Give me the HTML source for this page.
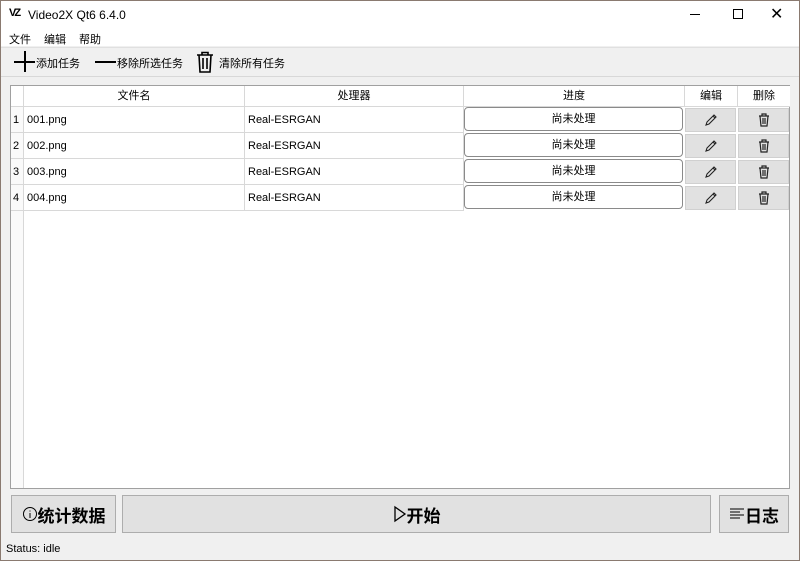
<!DOCTYPE html>
<html><head><meta charset="utf-8"><style>
*{box-sizing:border-box;margin:0;padding:0}
body{width:800px;height:561px;overflow:hidden;background:#f0f0f0;font-family:"Liberation Sans","Noto Sans CJK SC",sans-serif;font-size:11px;color:#000}
.frame{position:absolute;left:0;top:0;width:800px;height:561px;border:1px solid #8a7a70;pointer-events:none}
.abs{position:absolute}
.title{left:0;top:0;width:800px;height:30px;background:#fff}
.menu{left:0;top:30px;width:800px;height:16px;background:#fff}
.tb{left:0;top:47px;width:800px;height:30px;background:#f0f0f0;border-top:1px solid #e0e0e0;border-bottom:1px solid #d8d8d8}
.table{left:10px;top:85px;width:780px;height:404px;background:#fff;border:1px solid #a0a0a0}
.hc{position:absolute;top:0;height:21px;line-height:21px;text-align:center;border-right:1px solid #d8d8d8;border-bottom:1px solid #d8d8d8;background:#fff}
.cell{position:absolute;height:26px;line-height:26px;border-right:1px solid #d8d8d8;border-bottom:1px solid #d8d8d8;padding-left:3px;white-space:nowrap}
.pb{position:absolute;height:24px;border:1px solid #8a8a8a;border-radius:4px;background:#fff;text-align:center;line-height:22px}
.bt{position:absolute;height:24px;background:#e1e1e1;border:1px solid #d0d0d0;display:flex;align-items:center;justify-content:center}
.big{position:absolute;top:495px;height:38px;background:#e1e1e1;border:1px solid #adadad;display:flex;align-items:center;justify-content:center;font-size:17px;font-weight:bold}
</style></head><body>
<div class="abs title">
 <div class="abs" style="left:9px;top:7px;font-size:11px;font-weight:bold;letter-spacing:-2px">VZ</div>
 <div class="abs" style="left:28px;top:8px;font-size:12px">Video2X Qt6 6.4.0</div>
 <div class="abs" style="left:690px;top:14px;width:10px;height:1px;background:#000"></div>
 <div class="abs" style="left:733px;top:9px;width:10px;height:10px;border:1px solid #000"></div>
 <div class="abs" style="left:770px;top:4px;font-size:16px">✕</div>
</div>
<div class="abs menu"><span class="abs" style="left:9px;top:1px">文件</span><span class="abs" style="left:44px;top:1px">编辑</span><span class="abs" style="left:79px;top:1px">帮助</span></div>
<div class="abs tb">
 <div class="abs" style="left:14px;top:13px;width:21px;height:1.5px;background:#000"></div>
 <div class="abs" style="left:24px;top:3px;width:1.5px;height:21px;background:#000"></div>
 <span class="abs" style="left:36px;top:7px">添加任务</span>
 <div class="abs" style="left:95px;top:13px;width:21px;height:1.5px;background:#000"></div>
 <span class="abs" style="left:117px;top:7px">移除所选任务</span>
 <svg class="abs" style="left:196px;top:3px" width="18" height="22" viewBox="0 0 18 22" fill="none" stroke="#000" stroke-width="1.6"><path d="M1 4h16M6 4V1.5h6V4M3 4l1 17h10l1-17M7 7v11M11 7v11"/></svg>
 <span class="abs" style="left:219px;top:7px">清除所有任务</span>
</div>
<div class="abs table">
 <div class="hc" style="left:0;width:13px"></div>
 <div class="hc" style="left:13px;width:221px">文件名</div>
 <div class="hc" style="left:234px;width:219px">处理器</div>
 <div class="hc" style="left:453px;width:221px">进度</div>
 <div class="hc" style="left:674px;width:53px">编辑</div>
 <div class="hc" style="left:727px;width:52px;border-right:none">删除</div>
 <div class="abs" style="left:0;top:21px;width:13px;height:381px;background:#fafafa;border-right:1px solid #d8d8d8"></div>
 <div style="position:absolute;left:0;top:21px">
  <div class="cell" style="top:0;left:0;width:13px;padding-left:2px">1</div><div class="cell" style="top:0;left:13px;width:221px">001.png</div><div class="cell" style="top:0;left:234px;width:219px">Real-ESRGAN</div>
  <div class="cell" style="top:26px;left:0;width:13px;padding-left:2px">2</div><div class="cell" style="top:26px;left:13px;width:221px">002.png</div><div class="cell" style="top:26px;left:234px;width:219px">Real-ESRGAN</div>
  <div class="cell" style="top:52px;left:0;width:13px;padding-left:2px">3</div><div class="cell" style="top:52px;left:13px;width:221px">003.png</div><div class="cell" style="top:52px;left:234px;width:219px">Real-ESRGAN</div>
  <div class="cell" style="top:78px;left:0;width:13px;padding-left:2px">4</div><div class="cell" style="top:78px;left:13px;width:221px">004.png</div><div class="cell" style="top:78px;left:234px;width:219px">Real-ESRGAN</div>
  <div class="pb" style="top:0;left:453px;width:219px">尚未处理</div>
  <div class="pb" style="top:26px;left:453px;width:219px">尚未处理</div>
  <div class="pb" style="top:52px;left:453px;width:219px">尚未处理</div>
  <div class="pb" style="top:78px;left:453px;width:219px">尚未处理</div>
  <div class="bt" style="top:1px;left:674px;width:51px"><svg width="14" height="14" viewBox="0 0 14 14" fill="none" stroke="#222" stroke-width="1.1"><path d="M2 12l1-3 7-7 2 2-7 7zM9 3l2 2"/></svg></div>
  <div class="bt" style="top:27px;left:674px;width:51px"><svg width="14" height="14" viewBox="0 0 14 14" fill="none" stroke="#222" stroke-width="1.1"><path d="M2 12l1-3 7-7 2 2-7 7zM9 3l2 2"/></svg></div>
  <div class="bt" style="top:53px;left:674px;width:51px"><svg width="14" height="14" viewBox="0 0 14 14" fill="none" stroke="#222" stroke-width="1.1"><path d="M2 12l1-3 7-7 2 2-7 7zM9 3l2 2"/></svg></div>
  <div class="bt" style="top:79px;left:674px;width:51px"><svg width="14" height="14" viewBox="0 0 14 14" fill="none" stroke="#222" stroke-width="1.1"><path d="M2 12l1-3 7-7 2 2-7 7zM9 3l2 2"/></svg></div>
  <div class="bt" style="top:1px;left:727px;width:51px"><svg width="12" height="14" viewBox="0 0 12 14" fill="none" stroke="#222" stroke-width="1.2"><path d="M1 3h10M4 3V1h4v2M2 3l1 10h6l1-10M5 5v6M7 5v6"/></svg></div>
  <div class="bt" style="top:27px;left:727px;width:51px"><svg width="12" height="14" viewBox="0 0 12 14" fill="none" stroke="#222" stroke-width="1.2"><path d="M1 3h10M4 3V1h4v2M2 3l1 10h6l1-10M5 5v6M7 5v6"/></svg></div>
  <div class="bt" style="top:53px;left:727px;width:51px"><svg width="12" height="14" viewBox="0 0 12 14" fill="none" stroke="#222" stroke-width="1.2"><path d="M1 3h10M4 3V1h4v2M2 3l1 10h6l1-10M5 5v6M7 5v6"/></svg></div>
  <div class="bt" style="top:79px;left:727px;width:51px"><svg width="12" height="14" viewBox="0 0 12 14" fill="none" stroke="#222" stroke-width="1.2"><path d="M1 3h10M4 3V1h4v2M2 3l1 10h6l1-10M5 5v6M7 5v6"/></svg></div>
 </div>
</div>
<div class="big" style="left:11px;width:105px"><svg width="16" height="16" viewBox="0 0 16 16" fill="none" stroke="#000" stroke-width="1"><circle cx="8" cy="8" r="6.5"/><path d="M8 7v5M8 4.5v1"/></svg>统计数据</div>
<div class="big" style="left:122px;width:589px"><svg width="14" height="18" viewBox="0 0 14 18" fill="none" stroke="#000" stroke-width="1.3"><path d="M2 2l10 7-10 7z"/></svg>开始</div>
<div class="big" style="left:719px;width:70px"><svg width="16" height="14" viewBox="0 0 16 14" stroke="#000" stroke-width="1"><path d="M1 2h14M1 5h10M1 8h14M1 11h10"/></svg>日志</div>
<div class="abs" style="left:6px;top:543px;font-size:11px">Status: idle</div>
<div class="frame"></div>
</body></html>
